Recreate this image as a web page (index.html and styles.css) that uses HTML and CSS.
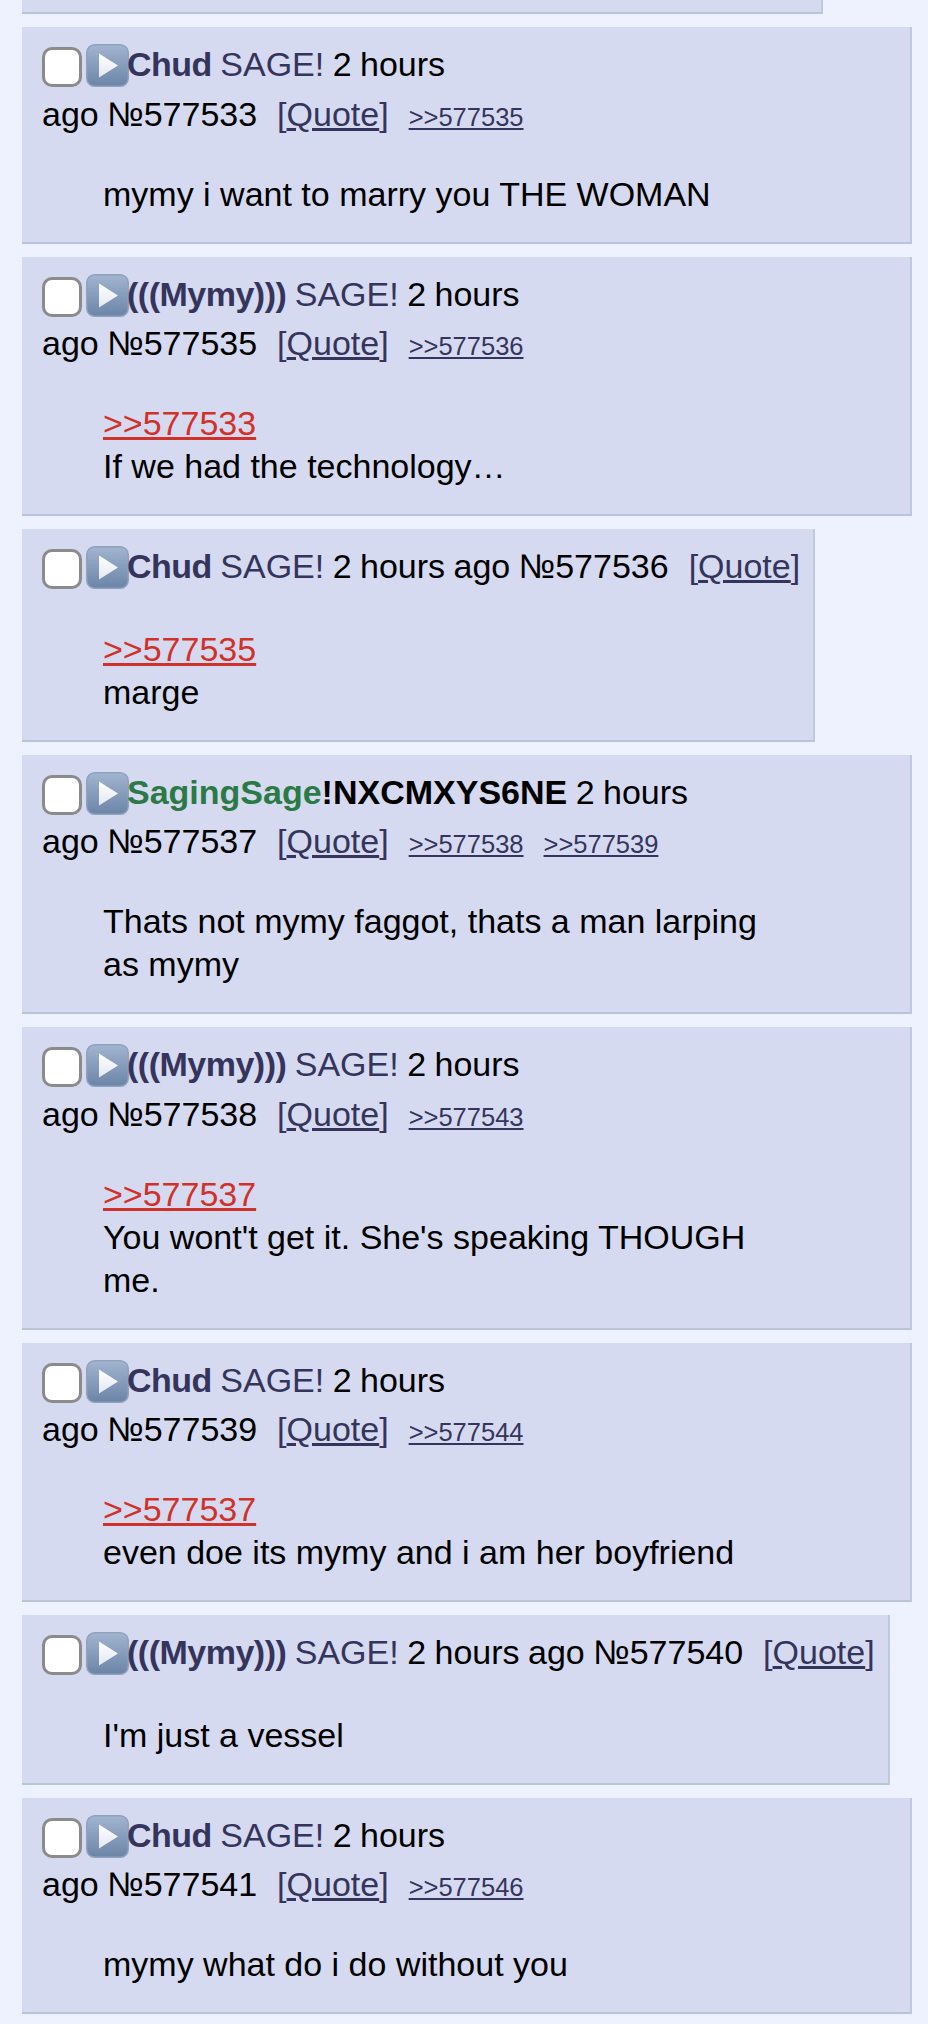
FILE: index.html
```html
<!DOCTYPE html>
<html lang="en">
<head>
    <meta charset="UTF-8">
    <meta name="viewport" content="width=device-width, initial-scale=1.0">
    <title>Thread</title>
    <link rel="stylesheet" href="styles.css">
</head>
<body>
    <!-- 播放按钮图标，下面用 use 引用 -->
    <svg class="defs" aria-hidden="true">
        <defs>
            <linearGradient id="pg" x1="0" y1="0" x2="0" y2="1">
                <stop offset="0" stop-color="#a2b5d0"/>
                <stop offset="1" stop-color="#6b84a7"/>
            </linearGradient>
            <linearGradient id="tg" x1="0" y1="0" x2="0" y2="1">
                <stop offset="0" stop-color="#ffffff"/>
                <stop offset="1" stop-color="#e3e7f1"/>
            </linearGradient>
            <symbol id="play" viewBox="0 0 43 43">
                <rect x="0.75" y="0.75" width="41.5" height="41.5" rx="8" fill="url(#pg)" stroke="#8ea2c0" stroke-width="1.5"/>
                <path d="M13 9.5 L32 21.5 L13 33.5 Z" fill="url(#tg)"/>
            </symbol>
        </defs>
    </svg>

    <div class="thread">
        <!-- 上一楼，只露出底边 -->
        <div class="reply stub"></div>

        <div class="reply">
            <div class="info"><span class="chk"></span><svg class="play"><use href="#play"/></svg><a class="mail" href="JavaScript:;"><b>Chud</b> SAGE!</a> 2 hours <span class="nw">ago №577533<span class="ql">[<a href="JavaScript:;">Quote</a>]</span><a class="bl" href="JavaScript:;">&gt;&gt;577535</a></span></div>
            <blockquote>mymy i want to marry you THE WOMAN</blockquote>
        </div>

        <div class="reply">
            <div class="info"><span class="chk"></span><svg class="play"><use href="#play"/></svg><a class="mail" href="JavaScript:;"><b>(((Mymy)))</b> SAGE!</a> 2 hours <span class="nw">ago №577535<span class="ql">[<a href="JavaScript:;">Quote</a>]</span><a class="bl" href="JavaScript:;">&gt;&gt;577536</a></span></div>
            <blockquote><a class="quote" href="JavaScript:;">&gt;&gt;577533</a><br>If we had the technology…</blockquote>
        </div>

        <div class="reply">
            <div class="info"><span class="chk"></span><svg class="play"><use href="#play"/></svg><a class="mail" href="JavaScript:;"><b>Chud</b> SAGE!</a> 2 hours <span class="nw">ago №577536<span class="ql">[<a href="JavaScript:;">Quote</a>]</span></span></div>
            <blockquote><a class="quote" href="JavaScript:;">&gt;&gt;577535</a><br>marge</blockquote>
        </div>

        <div class="reply">
            <div class="info"><span class="chk"></span><svg class="play"><use href="#play"/></svg><span class="name">SagingSage</span><span class="trip">!NXCMXYS6NE</span> 2 hours <span class="nw">ago №577537<span class="ql">[<a href="JavaScript:;">Quote</a>]</span><a class="bl" href="JavaScript:;">&gt;&gt;577538</a><a class="bl" href="JavaScript:;">&gt;&gt;577539</a></span></div>
            <blockquote>Thats not mymy faggot, thats a man larping as mymy</blockquote>
        </div>

        <div class="reply">
            <div class="info"><span class="chk"></span><svg class="play"><use href="#play"/></svg><a class="mail" href="JavaScript:;"><b>(((Mymy)))</b> SAGE!</a> 2 hours <span class="nw">ago №577538<span class="ql">[<a href="JavaScript:;">Quote</a>]</span><a class="bl" href="JavaScript:;">&gt;&gt;577543</a></span></div>
            <blockquote><a class="quote" href="JavaScript:;">&gt;&gt;577537</a><br>You wont't get it. She's speaking THOUGH me.</blockquote>
        </div>

        <div class="reply">
            <div class="info"><span class="chk"></span><svg class="play"><use href="#play"/></svg><a class="mail" href="JavaScript:;"><b>Chud</b> SAGE!</a> 2 hours <span class="nw">ago №577539<span class="ql">[<a href="JavaScript:;">Quote</a>]</span><a class="bl" href="JavaScript:;">&gt;&gt;577544</a></span></div>
            <blockquote><a class="quote" href="JavaScript:;">&gt;&gt;577537</a><br>even doe its mymy and i am her boyfriend</blockquote>
        </div>

        <div class="reply">
            <div class="info"><span class="chk"></span><svg class="play"><use href="#play"/></svg><a class="mail" href="JavaScript:;"><b>(((Mymy)))</b> SAGE!</a> 2 hours <span class="nw">ago №577540<span class="ql">[<a href="JavaScript:;">Quote</a>]</span></span></div>
            <blockquote>I'm just a vessel</blockquote>
        </div>

        <div class="reply">
            <div class="info"><span class="chk"></span><svg class="play"><use href="#play"/></svg><a class="mail" href="JavaScript:;"><b>Chud</b> SAGE!</a> 2 hours <span class="nw">ago №577541<span class="ql">[<a href="JavaScript:;">Quote</a>]</span><a class="bl" href="JavaScript:;">&gt;&gt;577546</a></span></div>
            <blockquote>mymy what do i do without you</blockquote>
        </div>
    </div>
</body>
</html>
```

FILE: styles.css
```css
* {
    margin: 0;
    padding: 0;
}
body {
    background: #eef2ff;
    font-family: "Liberation Sans", Arial, sans-serif;
    font-size: 34px;
    color: #000;
}
a {
    color: #34345c;
}
.defs {
    position: absolute;
    width: 0;
    height: 0;
}
.thread {
    display: flex;
    flex-direction: column;
    align-items: flex-start;
    gap: 13px;
    padding: 0 16px 8px 22px;
}
.reply {
    background: #d6daf0;
    border-right: 2px solid #bfc9dd;
    border-bottom: 2px solid #b7c5d9;
    padding: 15px 13px 14px 20px;
}
.stub {
    width: 799px;
    height: 12px;
    padding: 0;
}
.info {
    line-height: 44px;
    word-spacing: -1px;
}
/* 复选框 */
.chk {
    display: inline-block;
    box-sizing: border-box;
    width: 40px;
    height: 40px;
    border: 3px solid #8b8b8b;
    border-radius: 10px;
    background: #fff;
    vertical-align: -15.5px;
    margin: 0 4px 4.5px 0;
}
.play {
    width: 43px;
    height: 43px;
    vertical-align: -15.5px;
    margin: 0 -2px 4.5px 0;
}
.mail {
    text-decoration: none;
}
.mail b {
    letter-spacing: -0.5px;
}
.name {
    color: #2b7a45;
    font-weight: bold;
}
.trip {
    font-weight: bold;
}
.nw {
    white-space: nowrap;
}
.ql {
    color: #34345c;
    margin-left: 20px;
}
.bl {
    font-size: 25.5px;
    margin-left: 20px;
}
blockquote {
    margin: 34px 110px 12px 61px;
    line-height: 43px;
}
.quote {
    color: #d0322a;
}
```
